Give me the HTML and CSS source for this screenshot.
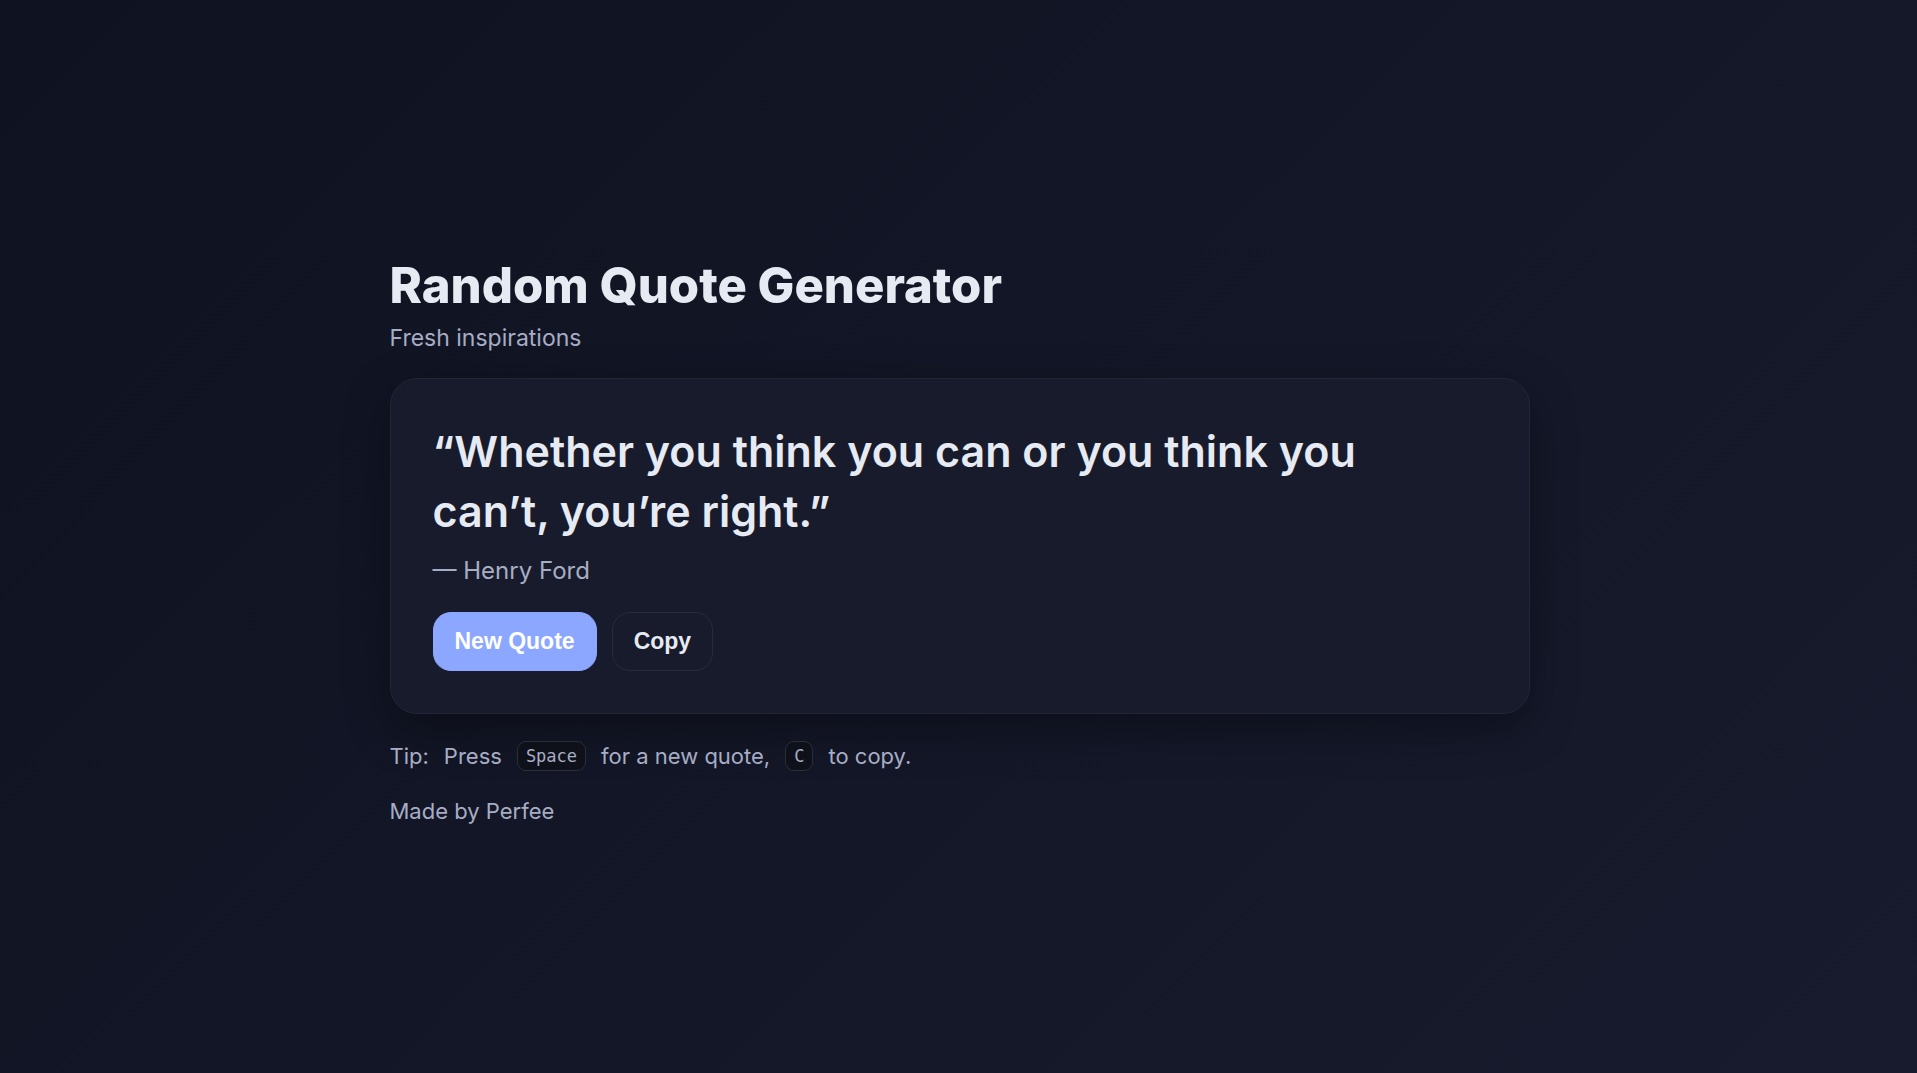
FILE: index.html
```html
<!DOCTYPE html>
<html lang="en">
<head>
<meta charset="utf-8">
<meta name="viewport" content="width=device-width, initial-scale=1">
<title>Random Quote Generator</title>
<link rel="stylesheet" href="styles.css">
</head>
<body>
<main class="container">
  <header class="header">
    <h1 class="title">Random Quote Generator</h1>
    <p class="subtitle">Fresh inspirations</p>
  </header>
  <section class="card">
    <blockquote class="quote">“Whether you think you can or you think you can’t, you’re right.”</blockquote>
    <p class="author">— Henry Ford</p>
    <div class="actions">
      <button class="btn btn-primary" type="button">New Quote</button>
      <button class="btn" type="button">Copy</button>
    </div>
  </section>
  <p class="tip"><span>Tip:</span><span>Press</span><kbd>Space</kbd><span>for a new quote,</span><kbd>C</kbd><span>to copy.</span></p>
  <footer class="footer">Made by Perfee</footer>
</main>
</body>
</html>
```
FILE: styles.css
```css
* {
  box-sizing: border-box;
}

body {
  margin: 0;
  min-height: 100vh;
  display: grid;
  place-items: center;
  background: linear-gradient(135deg, #0f1220, #171b2d);
  color: #e6eaf2;
  font-family: Inter, "Liberation Sans", sans-serif;
}

.container {
  width: 100%;
  max-width: 1212px;
  padding: 36px 35px 28px 37px;
}

.header {
  margin-bottom: 25px;
}

.title {
  margin: 0 0 6px;
  font-size: 49px;
  line-height: 62px;
  font-weight: 800;
}

.subtitle,
.author,
.quote,
.tip {
  margin: 0;
}

.subtitle,
.author {
  color: #a7adc4;
  line-height: 30px;
}

.subtitle {
  font-size: 23px;
}

.author {
  font-size: 24px;
}

.card {
  padding: 42px;
  border: 1px solid #232636;
  border-radius: 27px;
  background: #181b2b;
  box-shadow: 0 15px 45px rgba(0, 0, 0, 0.35);
}

.quote {
  margin-bottom: 15px;
  padding-right: 42px;
  font-size: 43px;
  line-height: 60px;
  font-weight: 600;
}

.actions {
  display: flex;
  flex-wrap: wrap;
  gap: 15px;
  margin-top: 26px;
}

.btn {
  padding: 15px 21px;
  border: 1px solid #282b3a;
  border-radius: 18px;
  background: transparent;
  color: #e6eaf2;
  font-family: "Liberation Sans", Arial, sans-serif;
  font-size: 23px;
  line-height: 27px;
  font-weight: 700;
  cursor: pointer;
}

.btn-primary {
  border-color: #8ba7ff;
  background: #8ba7ff;
  color: #ffffff;
}

.tip {
  display: flex;
  flex-wrap: wrap;
  align-items: center;
  gap: 15px;
  margin-top: 27px;
}

.tip,
.footer {
  color: #a7adc4;
  font-size: 22px;
  line-height: 30px;
}

kbd {
  padding: 0 8px;
  border: 1px solid #2b2d37;
  border-radius: 9px;
  background: #0f111a;
  font-family: "DejaVu Sans Mono", monospace;
  font-size: 17px;
  line-height: 28px;
}

.footer {
  margin-top: 25px;
}
```
